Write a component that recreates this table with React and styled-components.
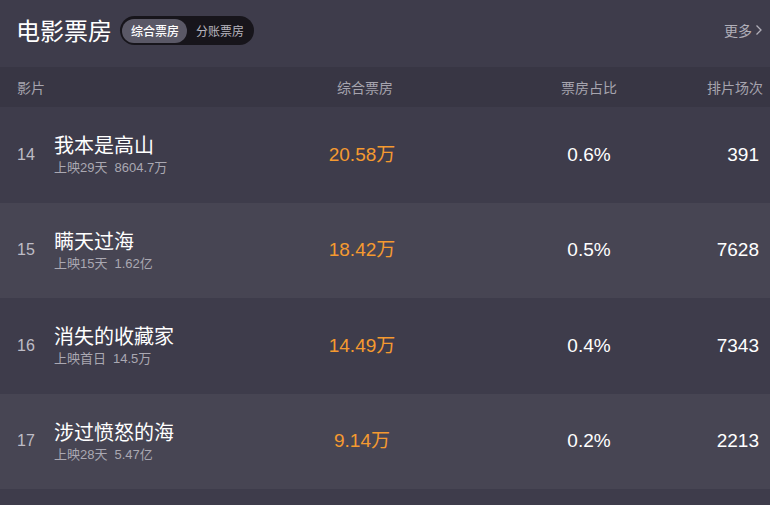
import styled, { createGlobalStyle } from "styled-components";

const GlobalStyle = createGlobalStyle`
  html, body {
    margin: 0;
    padding: 0;
    background: #3e3c4b;
  }
  body {
    font-family: "Liberation Sans", "Noto Sans CJK SC", sans-serif;
  }
`;

const films = [
  { rank: 14, name: "我本是高山", days: "上映29天", total: "8604.7万", box: "20.58万", ratio: "0.6%", shows: "391" },
  { rank: 15, name: "瞒天过海", days: "上映15天", total: "1.62亿", box: "18.42万", ratio: "0.5%", shows: "7628" },
  { rank: 16, name: "消失的收藏家", days: "上映首日", total: "14.5万", box: "14.49万", ratio: "0.4%", shows: "7343" },
  { rank: 17, name: "涉过愤怒的海", days: "上映28天", total: "5.47亿", box: "9.14万", ratio: "0.2%", shows: "2213" },
];

const Page = styled.section`
  width: 770px;
  height: 505px;
  overflow: hidden;
  background: #3e3c4b;
`;

const TopBar = styled.header`
  height: 67px;
  box-sizing: border-box;
  padding: 16px 7px 0 16px;
  display: flex;
  align-items: flex-start;
`;

const Title = styled.h2`
  margin: 0;
  font-family: "Noto Sans CJK SC", sans-serif;
  font-weight: 400;
  font-size: 24px;
  line-height: 28px;
  color: #fff;
`;

const Toggle = styled.div`
  margin-left: 8px;
  height: 29px;
  box-sizing: border-box;
  padding: 2px;
  border-radius: 15px;
  background: #17151b;
  display: flex;
  align-items: center;
`;

const ToggleBtn = styled.span`
  height: 24px;
  padding: 0 8px 0 9px;
  border-radius: 12px;
  display: inline-flex;
  align-items: center;
  font-family: "Noto Sans CJK SC", sans-serif;
  font-size: 12px;
  font-weight: ${p => (p.$active ? 500 : 400)};
  color: ${p => (p.$active ? "#fff" : "#b8b6bf")};
  background: ${p => (p.$active ? "#5a5866" : "transparent")};
`;

const More = styled.a`
  margin-left: auto;
  display: flex;
  align-items: center;
  gap: 3px;
  height: 28px;
  font-family: "Noto Sans CJK SC", sans-serif;
  font-size: 14px;
  color: #b1afb9;
  text-decoration: none;
`;

const Row = styled.div`
  display: flex;
  align-items: center;
  box-sizing: border-box;
  height: ${p => p.$h}px;
  padding: 0 7px 0 17px;
  background: ${p => p.$bg};
`;

const HeadText = styled.span`
  font-family: "Noto Sans CJK SC", sans-serif;
  font-size: 14px;
  color: #a6a4ae;
`;

const FilmCell = styled.div`
  flex: 1;
  display: flex;
  align-items: center;
`;

const ValueCell = styled.div`
  width: ${p => p.$w}px;
  margin-left: ${p => p.$ml || 0}px;
  text-align: ${p => p.$align};
  padding-right: ${p => p.$pr || 0}px;
  box-sizing: border-box;
  font-size: 19px;
  line-height: 22px;
  color: ${p => (p.$orange ? "#f59a30" : "#fff")};
  white-space: nowrap;
`;

const Rank = styled.span`
  width: 37px;
  font-size: 16px;
  color: #bebcc6;
`;

const FilmInfo = styled.div`
  display: flex;
  flex-direction: column;
  margin-top: 1px;
`;

const FilmName = styled.span`
  font-family: "Noto Sans CJK SC", sans-serif;
  font-size: 20px;
  line-height: 26px;
  color: #fff;
`;

const FilmMeta = styled.span`
  font-size: 13px;
  line-height: 20px;
  color: #aaa8b2;
  display: flex;
  gap: 7px;
`;

const Chevron = () => (
  <svg width="8" height="12" viewBox="0 0 8 12">
    <path d="M1.5 1.5 L6 6 L1.5 10.5" fill="none" stroke="#b1afb9" strokeWidth="1.3" />
  </svg>
);

const App = () => {
  return (
    <Page>
      <GlobalStyle />
      <TopBar>
        <Title>电影票房</Title>
        <Toggle>
          <ToggleBtn $active>综合票房</ToggleBtn>
          <ToggleBtn>分账票房</ToggleBtn>
        </Toggle>
        <More href="#">
          更多
          <Chevron />
        </More>
      </TopBar>

      <Row $h={40} $bg="#383644">
        <FilmCell>
          <HeadText>影片</HeadText>
        </FilmCell>
        <ValueCell $w={100} $align="center">
          <HeadText>综合票房</HeadText>
        </ValueCell>
        <ValueCell $w={100} $ml={124} $align="center">
          <HeadText>票房占比</HeadText>
        </ValueCell>
        <ValueCell $w={124} $align="right">
          <HeadText>排片场次</HeadText>
        </ValueCell>
      </Row>

      {films.map((f, i) => (
        <Row key={f.rank} $h={95.5} $bg={i % 2 ? "#474553" : "#3e3c4b"}>
          <FilmCell>
            <Rank>{f.rank}</Rank>
            <FilmInfo>
              <FilmName>{f.name}</FilmName>
              <FilmMeta>
                <span>{f.days}</span>
                <span>{f.total}</span>
              </FilmMeta>
            </FilmInfo>
          </FilmCell>
          <ValueCell $w={100} $align="center" $pr={6} $orange>{f.box}</ValueCell>
          <ValueCell $w={100} $ml={124} $align="center">{f.ratio}</ValueCell>
          <ValueCell $w={124} $align="right" $pr={4}>{f.shows}</ValueCell>
        </Row>
      ))}
    </Page>
  );
};

export default App;
